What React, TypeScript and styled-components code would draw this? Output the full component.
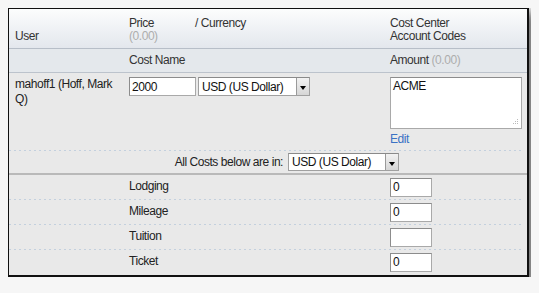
import styled, { createGlobalStyle } from "styled-components";

const GlobalStyle = createGlobalStyle`
  body {
    margin: 8px;
    background: #f6f6f6;
    font-family: "Liberation Sans", Arial, sans-serif;
    font-size: 12px;
    letter-spacing: -0.45px;
    color: #222;
  }
`;

const Panel = styled.div`
  box-sizing: border-box;
  width: 521px;
  height: 269px;
  background: #e9e9e9;
  border-style: solid;
  border-color: #111;
  border-width: 1px 2px 2px 1px;
  box-shadow: 5px 7px 10px 3px rgba(0, 0, 0, 0.5), -2px -1px 6px rgba(0, 0, 0, 0.12);
`;

const HeadRow = styled.div`
  display: grid;
  grid-template-columns: 120px 66px 195px 1fr;
  align-items: end;
  height: 40px;
  box-sizing: border-box;
  padding-bottom: 5px;
  background: linear-gradient(#fcfdfd, #e3e7ed);
  border-bottom: 1px solid #b7bec8;
  color: #333;
  line-height: 13px;
`;

const SubHeadRow = styled.div`
  display: grid;
  grid-template-columns: 120px 261px 1fr;
  align-items: center;
  height: 23px;
  background: #e4e8ec;
  border-bottom: 1px solid #bcc3cc;
  color: #333;
  line-height: 13px;
`;

const HeadCell = styled.div<{ $pad?: number }>`
  padding-left: ${(p) => p.$pad ?? 0}px;
`;

const Muted = styled.span`
  color: #adadad;
`;

const UserRow = styled.div`
  display: grid;
  grid-template-columns: 120px 261px 1fr;
  align-items: start;
  height: 77px;
  box-sizing: border-box;
  padding-top: 4px;
`;

const UserName = styled.div`
  padding: 0 8px 0 6px;
  line-height: 15px;
  color: #222;
`;

const Inline = styled.div`
  display: flex;
  gap: 2px;
`;

const TextBox = styled.input<{ $w: number }>`
  box-sizing: border-box;
  width: ${(p) => p.$w}px;
  height: 19px;
  margin: 0;
  padding: 0 2px;
  font: inherit;
  letter-spacing: inherit;
  color: #111;
  background: #fff;
  border: 1px solid #a9a9a9;
  border-top-color: #8c8c8c;
  border-left-color: #8c8c8c;
  outline: none;
`;

const SelectBox = styled.div<{ $w: number; $h: number }>`
  box-sizing: border-box;
  display: flex;
  align-items: stretch;
  width: ${(p) => p.$w}px;
  height: ${(p) => p.$h}px;
  background: #fff;
  border: 1px solid #a0a0a0;
  border-top-color: #8a8a8a;
`;

const SelectValue = styled.span`
  flex: 1;
  display: flex;
  align-items: center;
  padding-left: 3px;
  color: #111;
`;

const ArrowButton = styled.span`
  width: 12px;
  display: flex;
  align-items: center;
  justify-content: center;
  background: linear-gradient(#f2f2f2, #d6d6d6);
  border-left: 1px solid #9a9a9a;
`;

const Triangle = styled.span`
  width: 0;
  height: 0;
  margin-top: 3px;
  border-left: 3px solid transparent;
  border-right: 3px solid transparent;
  border-top: 4px solid #000;
`;

const CodesCell = styled.div`
  display: flex;
  flex-direction: column;
  align-items: flex-start;
`;

const AreaWrap = styled.div`
  position: relative;
`;

const Area = styled.textarea`
  box-sizing: border-box;
  display: block;
  width: 132px;
  height: 52px;
  margin: 0;
  padding: 1px 2px;
  font: inherit;
  letter-spacing: inherit;
  color: #111;
  background: #fff;
  border: 1px solid #a9a9a9;
  border-top-color: #8c8c8c;
  resize: none;
  outline: none;
`;

const Grip = styled.svg`
  position: absolute;
  right: 3px;
  bottom: 3px;
`;

const EditLink = styled.a`
  margin-top: 3px;
  line-height: 14px;
  color: #3a72c4;
  text-decoration: none;
`;

const Dashed = styled.div`
  height: 1px;
  margin-right: 3px;
  background-image: linear-gradient(to right, #c3d0de 2px, transparent 2px);
  background-size: 5px 1px;
  background-repeat: repeat-x;
`;

const CurrencyRow = styled.div`
  display: grid;
  grid-template-columns: 279px auto;
  align-items: center;
  height: 22px;
  border-bottom: 2px solid #b9b9b9;
`;

const CurrencyLabel = styled.span`
  text-align: right;
  padding-right: 2px;
  margin-right: 3px;
  color: #222;
`;

const CostRow = styled.div`
  display: grid;
  grid-template-columns: 120px 261px 1fr;
  align-items: center;
  height: 24px;
`;

const CostName = styled.span`
  color: #222;
  margin-top: -2px;
`;

const costs = [
  { name: "Lodging", amount: "0" },
  { name: "Mileage", amount: "0" },
  { name: "Tuition", amount: "" },
  { name: "Ticket", amount: "0" },
];

function Select({ w, h, value }: { w: number; h: number; value: string }) {
  return (
    <SelectBox $w={w} $h={h}>
      <SelectValue>{value}</SelectValue>
      <ArrowButton>
        <Triangle />
      </ArrowButton>
    </SelectBox>
  );
}

export default function App() {
  return (
    <>
      <GlobalStyle />
      <Panel>
        <HeadRow>
          <HeadCell $pad={6}>User</HeadCell>
          <HeadCell>
            Price
            <br />
            <Muted>(0.00)</Muted>
          </HeadCell>
          <HeadCell>
            / Currency
            <br />
            &nbsp;
          </HeadCell>
          <HeadCell>
            Cost Center
            <br />
            Account Codes
          </HeadCell>
        </HeadRow>
        <SubHeadRow>
          <span />
          <span>Cost Name</span>
          <span>
            Amount <Muted>(0.00)</Muted>
          </span>
        </SubHeadRow>
        <UserRow>
          <UserName>mahoff1 (Hoff, Mark Q)</UserName>
          <Inline>
            <TextBox $w={67} defaultValue="2000" />
            <Select w={112} h={19} value="USD (US Dollar)" />
          </Inline>
          <CodesCell>
            <AreaWrap>
              <Area defaultValue="ACME" />
              <Grip width="7" height="7" viewBox="0 0 7 7">
                <rect x="5" y="0" width="1" height="1" fill="#bbb" />
                <rect x="3" y="2" width="1" height="1" fill="#bbb" />
                <rect x="5" y="2" width="1" height="1" fill="#bbb" />
                <rect x="1" y="4" width="1" height="1" fill="#bbb" />
                <rect x="3" y="4" width="1" height="1" fill="#bbb" />
                <rect x="5" y="4" width="1" height="1" fill="#bbb" />
              </Grip>
            </AreaWrap>
            <EditLink href="#">Edit</EditLink>
          </CodesCell>
        </UserRow>
        <Dashed />
        <CurrencyRow>
          <CurrencyLabel>All Costs below are in:</CurrencyLabel>
          <Select w={111} h={18} value="USD (US Dolar)" />
        </CurrencyRow>
        {costs.map((c, i) => (
          <div key={c.name}>
            {i > 0 && <Dashed />}
            <CostRow>
              <span />
              <CostName>{c.name}</CostName>
              <TextBox $w={42} defaultValue={c.amount} />
            </CostRow>
          </div>
        ))}
      </Panel>
    </>
  );
}
